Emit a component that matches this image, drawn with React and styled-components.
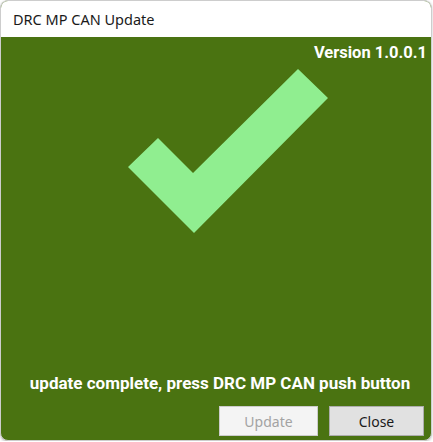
import React from "react";
import styled, { createGlobalStyle } from "styled-components";

const Global = createGlobalStyle`
  html, body { margin: 0; padding: 0; background: #ffffff; }
  * { box-sizing: border-box; }
`;

const Window = styled.div`
  width: 432px;
  height: 441px;
  border: 1px solid #cdcdcd;
  border-radius: 8px;
  overflow: hidden;
  display: flex;
  flex-direction: column;
  background: #4a7311;
  box-shadow: 0 1px 3px rgba(0, 0, 0, 0.25);
`;

const TitleBar = styled.div`
  height: 36px;
  flex: none;
  background: #ffffff;
  display: flex;
  align-items: center;
  padding-left: 12px;
  font-family: "Noto Sans", "Open Sans", sans-serif;
  font-size: 14.5px;
  color: #1a1a1a;
`;

const Body = styled.div`
  flex: 1;
  display: flex;
  flex-direction: column;
  padding: 6px 4px 4px 0;
  font-family: Roboto, "Liberation Sans", sans-serif;
  color: #ffffff;
`;

const Version = styled.div`
  text-align: right;
  font-weight: 700;
  font-size: 16.5px;
  line-height: 20px;
`;

const CheckWrap = styled.div`
  margin-top: 5px;
  padding-left: 126px;
  display: flex;
`;

const Spacer = styled.div`
  flex: 1;
`;

const Message = styled.div`
  text-align: center;
  padding-left: 12px;
  font-weight: 700;
  font-size: 17px;
  line-height: 20px;
`;

const ButtonRow = styled.div`
  margin-top: 13px;
  display: flex;
  justify-content: flex-end;
  gap: 11px;
  padding-right: 3px;
`;

const Button = styled.button`
  width: ${(p) => p.$w}px;
  height: 30px;
  border: 1px solid ${(p) => (p.disabled ? "#cccccc" : "#adadad")};
  background: ${(p) => (p.disabled ? "#f4f4f4" : "#e1e1e1")};
  color: ${(p) => (p.disabled ? "#a3a3a3" : "#1a1a1a")};
  font-family: "Noto Sans", "Open Sans", sans-serif;
  font-size: 14px;
  padding: 0;
  border-radius: 0;
`;

export default function App() {
  return (
    <>
      <Global />
      <Window>
        <TitleBar>DRC MP CAN Update</TitleBar>
        <Body>
          <Version>Version 1.0.0.1</Version>
          <CheckWrap>
            <svg width="202" height="166" viewBox="126 67 202 166">
              <polygon
                points="127,166 157,137 192,172 297,68 327,97 193,232"
                fill="#90ee90"
              />
            </svg>
          </CheckWrap>
          <Spacer />
          <Message>update complete, press DRC MP CAN push button</Message>
          <ButtonRow>
            <Button $w={99} disabled>Update</Button>
            <Button $w={95}>Close</Button>
          </ButtonRow>
        </Body>
      </Window>
    </>
  );
}
